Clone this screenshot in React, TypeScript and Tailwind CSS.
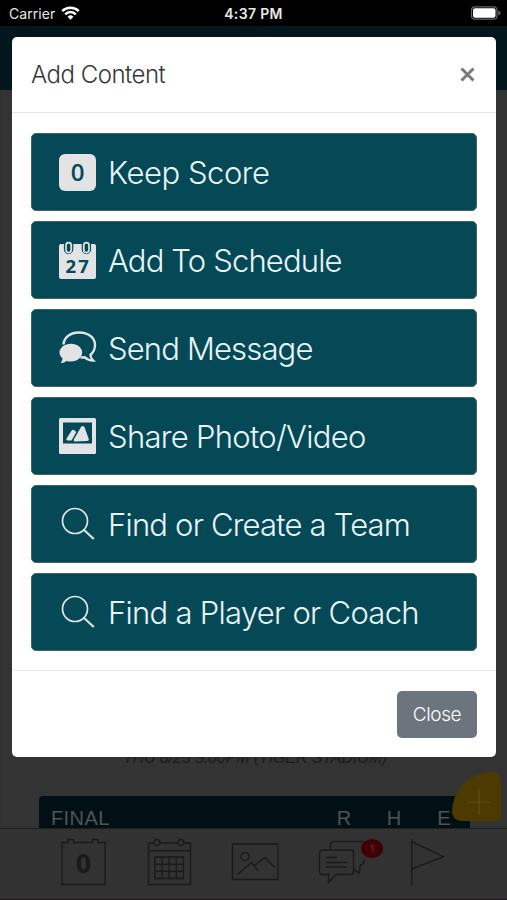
import type { ReactNode } from 'react';

interface Action {
  label: string;
  tracking: string;
  icon: ReactNode;
}

function ScoreIcon() {
  return (
    <div className="flex h-[37px] w-[37px] items-center justify-center rounded-[6px] bg-[#e2e3e5] font-['Open_Sans'] text-[24px] leading-none font-semibold text-[#054957]">
      0
    </div>
  );
}

function ScheduleIcon() {
  return (
    <svg className="h-[39px] w-[37px]" viewBox="0 0 37 39" fill="none">
      <path d="M2 3h33a2 2 0 0 1 2 2v31a2 2 0 0 1-2 2H2a2 2 0 0 1-2-2V5a2 2 0 0 1 2-2z" fill="#e2e3e5" />
      <path d="M5.400 0v8.500a4.200 4.200 0 0 0 8.400 0V0M23.200 0v8.500a4.200 4.200 0 0 0 8.400 0V0" fill="#054957" stroke="#054957" />
      <rect x="7" y="1.700" width="5.200" height="10" rx="2.600" stroke="#e2e3e5" strokeWidth="1.700" />
      <rect x="24.800" y="1.700" width="5.200" height="10" rx="2.600" stroke="#e2e3e5" strokeWidth="1.700" />
      <text x="19.200" y="31.500" textAnchor="middle" fontFamily="Open Sans" fontWeight="700" fontSize="18.500" letterSpacing="2.200" fill="#054957">
        27
      </text>
    </svg>
  );
}

function MessageIcon() {
  return (
    <svg className="h-[34px] w-[38px]" viewBox="0 0 38 34" fill="none">
      <path
        d="M4.500 13.500C5 6 11.500 1.500 20 1.500c9.500 0 16 5.300 16 12.500 0 4.500-2 7.700-4.600 10 .2 2.200 1.200 4 2.800 5.600-3.500 0-6.300-1.200-8.700-3.400-1.500.3-2.500.3-4 .3"
        stroke="#e2e3e5"
        strokeWidth="2.400"
      />
      <path
        d="M12 12.700c6.400 0 11.200 4 11.200 8.900s-4.800 9-11.200 9c-1.700 0-3-.2-4.300-.7-1.600 1.200-3.700 2-6.100 2.100 1.200-1.400 1.800-2.900 1.900-4.700C1.700 25.900.5 23.900.5 21.600c0-4.900 5.100-8.900 11.500-8.900z"
        fill="#e2e3e5"
      />
    </svg>
  );
}

function PhotoIcon() {
  return (
    <svg className="h-[36px] w-[37px]" viewBox="0 0 37 36">
      <rect width="37" height="36" rx="1.500" fill="#e2e3e5" />
      <path d="M4 4.500h29V25.500H4z" fill="#054957" />
      <path d="M7.500 20.500l5-7.700q1.100-1.700 2.800-.5l2 1.800-4.800 8.400H8.300q-1.500-.3-.8-2z" fill="#e2e3e5" />
      <path d="M14.800 21.500l7.100-12.300q1.800-2.600 3.600 0l4.300 11.800q.3 1.900-1.600 2L15.800 23.400q-1.700-.2-1-1.900z" fill="#e2e3e5" />
    </svg>
  );
}

function SearchIcon() {
  return (
    <svg className="h-[34px] w-[34px]" viewBox="0 0 34 34" fill="none" stroke="#dfe6e8">
      <circle cx="14" cy="14" r="12.500" strokeWidth="1.700" />
      <path d="M22.800 22.800l10 9.300" strokeWidth="2.100" />
    </svg>
  );
}

const actions: Action[] = [
  { label: 'Keep Score', tracking: 'tracking-[-0.45px]', icon: <ScoreIcon /> },
  { label: 'Add To Schedule', tracking: 'tracking-[-0.85px]', icon: <ScheduleIcon /> },
  { label: 'Send Message', tracking: 'tracking-[-0.85px]', icon: <MessageIcon /> },
  { label: 'Share Photo/Video', tracking: 'tracking-[-0.7px]', icon: <PhotoIcon /> },
  { label: 'Find or Create a Team', tracking: 'tracking-[-0.8px]', icon: <SearchIcon /> },
  { label: 'Find a Player or Coach', tracking: 'tracking-[-0.72px]', icon: <SearchIcon /> },
];

function StatusBar() {
  return (
    <div className="grid h-[26px] grid-cols-3 items-center bg-black px-[9px] text-[14px] text-[#e8e8e8]">
      <div className="flex items-center gap-[6px]">
        <span className="tracking-[0.05px]">Carrier</span>
        <svg className="h-[14px] w-[19px]" viewBox="0 0 19 14" fill="none" stroke="#fff" strokeWidth="2.500">
          <path d="M1.200 5.200a11.800 11.800 0 0 1 16.600 0" />
          <path d="M4.200 8.300a7.500 7.500 0 0 1 10.600 0" />
          <path d="M6.600 10.800a4.100 4.100 0 0 1 5.800 0L9.500 13.700z" fill="#fff" stroke="none" />
        </svg>
      </div>
      <span className="text-center font-semibold tracking-[0.35px] whitespace-nowrap">4:37 PM</span>
      <svg className="-mr-[3px] h-[14px] w-[31px] justify-self-end" viewBox="0 0 31 14" fill="none">
        <rect x="1.500" y=".8" width="25.500" height="12.400" rx="3.500" stroke="#666" strokeWidth="1.200" />
        <rect x="3" y="2.300" width="22.500" height="9.400" rx="2" fill="#fff" />
        <path d="M28.300 4.700a2.300 2.300 0 0 1 0 4.600z" fill="#666" />
      </svg>
    </div>
  );
}

function TabBar() {
  return (
    <div className="relative flex h-[72px] items-start border-t border-b border-t-[#1f1f1f] border-b-[#251c22] bg-[#323232] pt-[9px] pl-[61px]">
      <svg className="h-[48px] w-[45px]" viewBox="0 0 45 48" fill="none" stroke="#1a1a1a" strokeWidth="1.400">
        <path d="M1 4.500h6V1.500h5.500v3h19v-3H37v3h7v42H1z" />
        <text x="22.500" y="34.500" textAnchor="middle" fontFamily="Open Sans" fontWeight="700" fontSize="27" fill="#1a1a1a" stroke="none">
          0
        </text>
      </svg>
      <svg className="ml-[41px] h-[48px] w-[45px]" viewBox="0 0 45 48" fill="none" stroke="#1a1a1a" strokeWidth="1.400">
        <path d="M7 5H1.500v41.500h42V5H37M13 5h18M1.500 12.800h42" />
        <circle cx="10" cy="4.500" r="3" />
        <circle cx="34" cy="4.500" r="3" />
        <path d="M8 19h28.500v21.500H8zM15 19v21.500M22.200 19v21.500M29.300 19v21.500M8 26.200h28.500M8 33.300h28.500" />
      </svg>
      <svg className="ml-[39px] h-[48px] w-[48px]" viewBox="0 0 48 48" fill="none" stroke="#1a1a1a" strokeWidth="1.400">
        <path d="M1.500 6h45.500v35.500H1.500z" />
        <circle cx="14" cy="18.500" r="4" />
        <path d="M6.500 36.500l13.800-11.700 7 8M23.500 27.500L34 19.500l9.500 9.700" />
      </svg>
      <svg className="ml-[39px] h-[48px] w-[48px]" viewBox="0 0 48 48" fill="none" stroke="#1a1a1a" strokeWidth="1.400">
        <path d="M12.500 11.500V6.500a3 3 0 0 1 3-3h30M36 31.500l5 4 1.500-8.500q4-1 4-6" />
        <path d="M4.500 12h28a3 3 0 0 1 3 3v18.500a3 3 0 0 1-3 3H18l-7.500 8V36.500h-6a3 3 0 0 1-3-3V15a3 3 0 0 1 3-3z" />
        <path d="M8 19.500h11M8 24.500h21M8 29h21" />
      </svg>
      <svg className="ml-[44px] h-[48px] w-[35px]" viewBox="0 0 35 48" fill="none" stroke="#1a1a1a" strokeWidth="1.400">
        <path d="M1.700 1v46M1.700 3.500L33.500 18.700 1.700 31" />
      </svg>
      <div className="absolute top-[10px] left-[361px] flex h-[19px] w-[22px] items-center justify-center rounded-[50%] bg-[#400004] text-[9px] text-[#7a3035]">
        1
      </div>
    </div>
  );
}

function DimmedPage() {
  return (
    <div className="flex h-full flex-col bg-[#333333]">
      <StatusBar />
      <div className="h-[64px] bg-[#01171c]" />
      <div className="flex flex-1 flex-col justify-end overflow-hidden border-l border-[#303030]">
        <div className="pl-[2px] text-center font-['Liberation_Sans'] text-[16px] leading-[20px] tracking-[-0.1px] text-[#1c1c1c] italic">
          THU 8/25 5:00PM (TIGER STADIUM)
        </div>
        <div className="mt-[28px] mr-[37px] ml-[38px] grid h-[32px] grid-cols-[1fr_50px_50px_50px] rounded-t-[4px] bg-[#001014] pr-[1px] pl-[12px] font-['Liberation_Sans'] text-[20px] leading-[44px] text-[#4f5456]">
          <span className="tracking-[0.4px]">FINAL</span>
          <span className="text-center">R</span>
          <span className="text-center">H</span>
          <span className="text-center">E</span>
        </div>
      </div>
      <TabBar />
    </div>
  );
}

export default function App() {
  return (
    <div className="relative h-[900px] w-[507px] overflow-hidden bg-[#333333] font-['Inter',sans-serif]">
      <DimmedPage />

      {/* floating add button */}
      <div className="absolute top-[772px] left-[452px] flex h-[49px] w-[49px] items-center justify-center rounded-tl-[44px] rounded-tr-[10px] rounded-br-[6px] rounded-bl-[10px] bg-[#4d3a00]">
        <svg className="mt-[10px] ml-[5px] h-[28px] w-[26px]" viewBox="0 0 26 28" stroke="#5f4c1c" strokeWidth="1.200">
          <path d="M13 1v26M1 14h24" />
        </svg>
      </div>

      <div
        role="dialog"
        className="absolute top-[37px] left-[12px] flex h-[720px] w-[484px] flex-col rounded-[5px] bg-white font-light"
      >
        <div className="flex h-[76px] items-center justify-between border-b border-[#e4e7e9] pr-[21px] pl-[19px]">
          <h5 className="text-[24px] tracking-[-0.5px] text-[#343638]">Add Content</h5>
          <button aria-label="Dismiss" className="h-[15px] w-[15px]">
            <svg viewBox="0 0 15 15" stroke="#7a7a7a" strokeWidth="3">
              <path d="M1.500 1.500l12 12M13.500 1.500l-12 12" />
            </svg>
          </button>
        </div>

        <div className="flex flex-1 flex-col gap-[10px] px-[19px] pt-[20px]">
          {actions.map((action) => (
            <button
              key={action.label}
              className="flex h-[78px] items-center rounded-[5px] border border-[#3f6657] bg-[#054957] pl-[26px] text-left"
            >
              <span className="flex w-[39px] justify-center">{action.icon}</span>
              <span className={`ml-[11px] text-[31px] leading-none whitespace-nowrap text-[#e9f5fa] ${action.tracking}`}>
                {action.label}
              </span>
            </button>
          ))}
        </div>

        <div className="flex h-[87px] items-center justify-end border-t border-[#e4e7e9] pr-[19px]">
          <button className="h-[47px] w-[80px] rounded-[5px] bg-[#6c757d] pt-[2px] text-[19px] tracking-[-0.35px] text-white">
            Close
          </button>
        </div>
      </div>
    </div>
  );
}
